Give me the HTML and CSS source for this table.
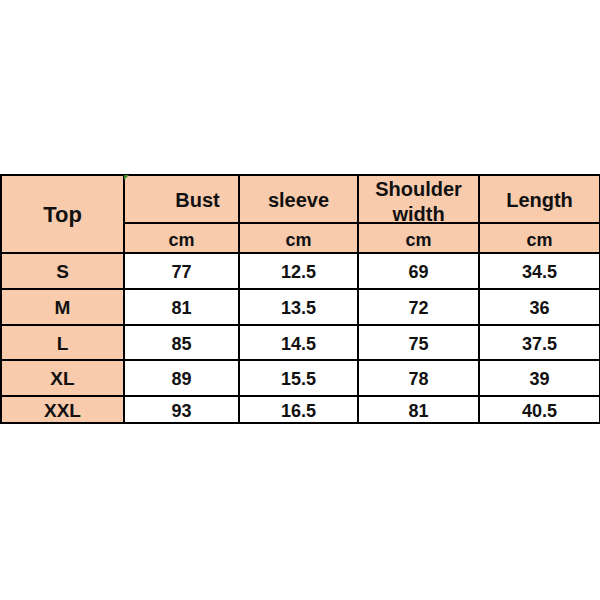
FILE: index.html
```html
<!DOCTYPE html>
<html>
<head>
<meta charset="utf-8">
<link rel="stylesheet" href="styles.css">
</head>
<body>
<table class="size-table">
  <colgroup>
    <col class="c1"><col class="c2"><col class="c3"><col class="c4"><col class="c5">
  </colgroup>
  <tr class="h1">
    <td class="head top-cell" rowspan="2">Top</td>
    <td class="head title bust"><span class="marker"></span>Bust</td>
    <td class="head title">sleeve</td>
    <td class="head title"><div class="two-line">Shoulder<br>width</div></td>
    <td class="head title">Length</td>
  </tr>
  <tr class="h2">
    <td class="head unit">cm</td>
    <td class="head unit">cm</td>
    <td class="head unit">cm</td>
    <td class="head unit">cm</td>
  </tr>
  <tr class="r">
    <td class="head size">S</td><td>77</td><td>12.5</td><td>69</td><td>34.5</td>
  </tr>
  <tr class="r">
    <td class="head size">M</td><td>81</td><td>13.5</td><td>72</td><td>36</td>
  </tr>
  <tr class="r r35">
    <td class="head size">L</td><td>85</td><td>14.5</td><td>75</td><td>37.5</td>
  </tr>
  <tr class="r">
    <td class="head size">XL</td><td>89</td><td>15.5</td><td>78</td><td>39</td>
  </tr>
  <tr class="r last">
    <td class="head size">XXL</td><td>93</td><td>16.5</td><td>81</td><td>40.5</td>
  </tr>
</table>
</body>
</html>
```

FILE: styles.css
```css
html, body {
  margin: 0;
  padding: 0;
  background: #ffffff;
}

.size-table {
  margin-top: 174px;
  width: 599px;
  border-collapse: collapse;
  table-layout: fixed;
  font-family: "Liberation Sans", Arial, sans-serif;
  font-weight: bold;
  color: #111;
}

.c1 { width: 123px; }
.c2 { width: 115px; }
.c3 { width: 119px; }
.c4 { width: 121px; }
.c5 { width: 121px; }

.size-table td {
  border: 2px solid #000;
  text-align: center;
  vertical-align: middle;
  padding: 2px 0 0;
  font-size: 18px;
  line-height: 20px;
  position: relative;
  background: #ffffff;
}

.size-table td.head {
  background: #f8cbad;
}

.h1 { height: 48px; }
.h2 { height: 30px; }
.r { height: 36px; }
.r35 { height: 35px; }
.last { height: 27px; }

.size-table .top-cell {
  font-size: 22px;
  padding-top: 2px;
}

.size-table .title {
  font-size: 20px;
  padding-top: 2px;
}

.size-table .bust {
  padding-left: 32px;
}

.two-line {
  line-height: 25px;
  margin: -3px 0 -7px;
}

.size-table .unit {
  font-size: 18px;
  padding-top: 4px;
}

.size-table .size {
  font-size: 19px;
}

.marker {
  position: absolute;
  left: -1px;
  top: -1px;
  width: 0;
  height: 0;
  border-top: 5px solid #3c8c1e;
  border-right: 5px solid transparent;
}
```
